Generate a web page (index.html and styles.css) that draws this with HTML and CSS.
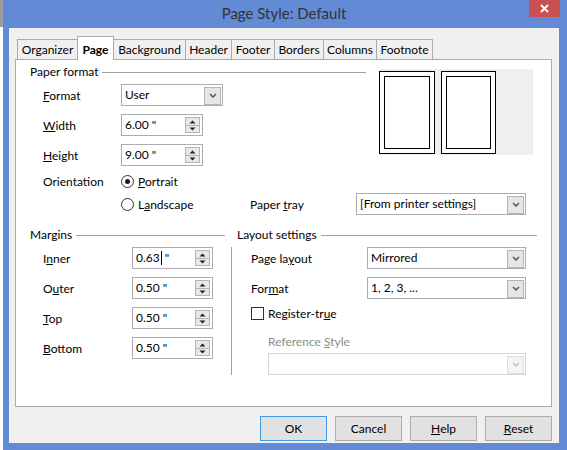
FILE: index.html
```html
<!DOCTYPE html>
<html>
<head>
<meta charset="utf-8">
<title>Page Style: Default</title>
<link rel="stylesheet" href="styles.css">
</head>
<body>
<div class="screen">
  <div class="behind"></div>
  <div class="window">
    <div class="titlebar">
      <div class="title">Page Style: Default</div>
      <div class="close"><svg width="9" height="9" viewBox="0 0 9 9"><path d="M1 1L8 8M8 1L1 8" stroke="#fff" stroke-width="1.8" fill="none"/></svg></div>
    </div>
    <div class="client">
      <div class="tabs">
        <div class="tab t-org">Organizer</div>
        <div class="tab active t-page">Page</div>
        <div class="tab t-bg">Background</div>
        <div class="tab t-hdr">Header</div>
        <div class="tab t-ftr">Footer</div>
        <div class="tab t-brd">Borders</div>
        <div class="tab t-col">Columns</div>
        <div class="tab t-fn">Footnote</div>
      </div>
      <div class="panel">
        <div class="pf">
          <div class="pf-main">
            <div class="legend"><span>Paper format</span><i class="rule"></i></div>
            <div class="frow">
              <span class="lbl"><u>F</u>ormat</span>
              <div class="select s-format"><span class="val">User</span><span class="drop"><svg width="8" height="5" viewBox="0 0 8 5"><path d="M1 1L4 4L7 1" stroke="#555" stroke-width="1.5" fill="none"/></svg></span></div>
            </div>
            <div class="frow">
              <span class="lbl"><u>W</u>idth</span>
              <div class="field f-size"><span class="val">6.00 "</span><span class="spinbtn"><svg width="13" height="14" viewBox="0 0 13 14"><path d="M0 7.5H13" stroke="#b5b5b5"/><path d="M3.5 5.5H9.5L6.5 2.5Z" fill="#222"/><path d="M3.5 9.5H9.5L6.5 12.5Z" fill="#222"/></svg></span></div>
            </div>
            <div class="frow">
              <span class="lbl"><u>H</u>eight</span>
              <div class="field f-size"><span class="val">9.00 "</span><span class="spinbtn"><svg width="13" height="14" viewBox="0 0 13 14"><path d="M0 7.5H13" stroke="#b5b5b5"/><path d="M3.5 5.5H9.5L6.5 2.5Z" fill="#222"/><path d="M3.5 9.5H9.5L6.5 12.5Z" fill="#222"/></svg></span></div>
            </div>
          </div>
          <div class="preview">
            <div class="page p1"><div class="inner"></div></div>
            <div class="page p2"><div class="inner"></div></div>
          </div>
          <div class="orient">
            <div class="orow">
              <span class="lbl">Orientation</span>
              <span class="radio checked"></span><span class="rtext"><u>P</u>ortrait</span>
            </div>
            <div class="orow orow2">
              <span class="lbl"></span>
              <span class="rgroup"><span class="radio"></span><span class="rtext">L<u>a</u>ndscape</span></span>
              <span class="tray-lbl">Paper <u>t</u>ray</span>
              <div class="select s-tray"><span class="val">[From printer settings]</span><span class="drop"><svg width="8" height="5" viewBox="0 0 8 5"><path d="M1 1L4 4L7 1" stroke="#555" stroke-width="1.5" fill="none"/></svg></span></div>
            </div>
          </div>
        </div>

        <div class="bottom">
          <div class="legend lg-margins"><span>Margins</span><i class="rule"></i></div>
          <div class="legend lg-layout"><span>Layout settings</span><i class="rule"></i></div>
          <div class="sep"></div>
          <div class="margins">
            <div class="frow">
              <span class="lbl">I<u>n</u>ner</span>
              <div class="field f-margin"><span class="val">0.63<span class="caret"></span> "</span><span class="spinbtn"><svg width="13" height="14" viewBox="0 0 13 14"><path d="M0 7.5H13" stroke="#b5b5b5"/><path d="M3.5 5.5H9.5L6.5 2.5Z" fill="#222"/><path d="M3.5 9.5H9.5L6.5 12.5Z" fill="#222"/></svg></span></div>
            </div>
            <div class="frow">
              <span class="lbl">O<u>u</u>ter</span>
              <div class="field f-margin"><span class="val">0.50 "</span><span class="spinbtn"><svg width="13" height="14" viewBox="0 0 13 14"><path d="M0 7.5H13" stroke="#b5b5b5"/><path d="M3.5 5.5H9.5L6.5 2.5Z" fill="#222"/><path d="M3.5 9.5H9.5L6.5 12.5Z" fill="#222"/></svg></span></div>
            </div>
            <div class="frow">
              <span class="lbl"><u>T</u>op</span>
              <div class="field f-margin"><span class="val">0.50 "</span><span class="spinbtn"><svg width="13" height="14" viewBox="0 0 13 14"><path d="M0 7.5H13" stroke="#b5b5b5"/><path d="M3.5 5.5H9.5L6.5 2.5Z" fill="#222"/><path d="M3.5 9.5H9.5L6.5 12.5Z" fill="#222"/></svg></span></div>
            </div>
            <div class="frow">
              <span class="lbl"><u>B</u>ottom</span>
              <div class="field f-margin"><span class="val">0.50 "</span><span class="spinbtn"><svg width="13" height="14" viewBox="0 0 13 14"><path d="M0 7.5H13" stroke="#b5b5b5"/><path d="M3.5 5.5H9.5L6.5 2.5Z" fill="#222"/><path d="M3.5 9.5H9.5L6.5 12.5Z" fill="#222"/></svg></span></div>
            </div>
          </div>
          <div class="layout">
            <div class="frow">
              <span class="lbl">Page la<u>y</u>out</span>
              <div class="select s-layout"><span class="val">Mirrored</span><span class="drop"><svg width="8" height="5" viewBox="0 0 8 5"><path d="M1 1L4 4L7 1" stroke="#555" stroke-width="1.5" fill="none"/></svg></span></div>
            </div>
            <div class="frow">
              <span class="lbl">For<u>m</u>at</span>
              <div class="select s-layout"><span class="val">1, 2, 3, ...</span><span class="drop"><svg width="8" height="5" viewBox="0 0 8 5"><path d="M1 1L4 4L7 1" stroke="#555" stroke-width="1.5" fill="none"/></svg></span></div>
            </div>
            <div class="crow"><span class="check"></span><span class="ctext">Register-tr<u>u</u>e</span></div>
            <div class="ref-lbl">Reference <u>S</u>tyle</div>
            <div class="select s-ref disabled"><span class="val"></span><span class="drop"><svg width="8" height="5" viewBox="0 0 8 5"><path d="M1 1L4 4L7 1" stroke="#c4c4c4" stroke-width="1.5" fill="none"/></svg></span></div>
          </div>
        </div>
      </div>
      <div class="buttons">
        <div class="btn default">OK</div>
        <div class="btn">Cancel</div>
        <div class="btn"><u>H</u>elp</div>
        <div class="btn"><u>R</u>eset</div>
      </div>
    </div>
  </div>
</div>
</body>
</html>
```

FILE: styles.css
```css
* { box-sizing: border-box; }
html, body { margin: 0; padding: 0; }
body {
  width: 567px;
  height: 450px;
  overflow: hidden;
  font-family: Lato, "Open Sans", sans-serif;
  font-size: 12px;
  color: #000;
  background: #fff;
}
u { text-decoration: underline; text-underline-offset: 1px; text-decoration-thickness: 1px; }

.screen { display: flex; width: 567px; height: 450px; }
.behind { width: 3px; background: linear-gradient(#9d9d9d 0 27px, #fff 27px); }
.window {
  flex: 1;
  display: flex;
  flex-direction: column;
  background: #628ad5;
  padding: 0 8px 7px 6px;
}

/* title bar */
.titlebar { height: 28px; display: grid; grid-template-columns: 1fr auto 1fr; }
.title {
  grid-column: 2;
  font-size: 15px;
  line-height: 20px;
  padding-top: 3px;
  color: #333;
  white-space: nowrap;
}
.close {
  grid-column: 3;
  justify-self: end;
  width: 31px;
  height: 17px;
  margin-right: -1px;
  background: #c75050;
  display: flex;
  align-items: center;
  justify-content: center;
}
.close svg { display: block; }

/* client */
.client {
  flex: 1;
  display: flex;
  flex-direction: column;
  background: #f0f0f0;
  padding: 8px 7px 2px 6px;
}
.tabs {
  display: flex;
  align-items: flex-end;
  height: 24px;
  margin-bottom: -1px;
  padding-left: 2px;
}
.tab {
  height: 21px;
  border: 1px solid #acacac;
  border-bottom: none;
  margin-right: -1px;
  line-height: 19px;
  background: #f0f0f0;
  white-space: nowrap;
  text-align: center;
  flex: none;
}
.tab.active {
  height: 24px;
  padding-top: 3px;
  background: #fff;
  font-weight: bold;
  position: relative;
  z-index: 1;
}
.t-org { width: 61px; }
.t-page { width: 37px; }
.t-bg { width: 73px; }
.t-hdr { width: 47px; }
.t-ftr { width: 44px; }
.t-brd { width: 50px; }
.t-col { width: 54px; }
.t-fn { width: 57px; }

.panel {
  flex: 1;
  background: #fff;
  border: 1px solid #acacac;
  padding: 4px 0 0 14px;
}

/* legends */
.legend { display: flex; align-items: center; height: 16px; line-height: 16px; white-space: nowrap; }
.legend .rule { flex: 1; height: 1px; background: #a0a0a0; margin-left: 4px; }

/* form rows */
.frow { display: flex; align-items: center; height: 22px; margin-top: 8px; }
.legend + .frow { margin-top: 4px; }
.lbl { white-space: nowrap; }

.field, .select {
  height: 22px;
  border: 1px solid #abadb3;
  background: #fff;
  display: flex;
  align-items: center;
  padding-left: 3px;
}
.val { flex: 1; white-space: nowrap; overflow: hidden; line-height: 16px; }
.spinbtn {
  width: 15px;
  height: 16px;
  border: 1px solid #b5b5b5;
  background: #e8e8e8;
  margin-right: 2px;
  display: flex;
}
.spinbtn svg { display: block; }
.drop {
  width: 17px;
  height: 18px;
  margin-right: 1px;
  margin-top: 1px;
  border: 1px solid #b5b5b5;
  background: #e6e6e6;
  display: flex;
  align-items: center;
  justify-content: center;
}
.drop svg { display: block; }
.caret { display: inline-block; width: 1px; height: 14px; background: #000; vertical-align: -3px; margin-left: 1px; }

/* paper format */
.pf { display: grid; grid-template-columns: 336px 154px; column-gap: 13px; }
.pf-main .frow { padding-left: 13px; }
.pf .lbl { width: 78px; }
.s-format { width: 102px; }
.f-size { width: 82px; }

.preview {
  margin-top: 5px;
  height: 86px;
  background: #efefef;
  display: flex;
  align-items: flex-start;
  gap: 6px;
  padding-top: 2px;
}
.page { height: 83px; border: 1px solid #000; background: #fff; padding: 4px; display: flex; }
.p1 { width: 56px; }
.p2 { width: 55px; }
.inner { flex: 1; border: 1px solid #000; }

.orient { grid-column: 1 / -1; padding-left: 13px; }
.orow { display: flex; align-items: center; height: 16px; margin-top: 7px; }
.orow2 { height: 22px; margin-top: 4px; }
.radio {
  width: 13px;
  height: 13px;
  border: 1px solid #333;
  border-radius: 50%;
  background: #fff;
  display: flex;
  align-items: center;
  justify-content: center;
  flex: none;
}
.radio.checked::after { content: ""; width: 5px; height: 5px; border-radius: 50%; background: #1a1a1a; }
.rtext { margin-left: 4px; white-space: nowrap; }
.rgroup { display: flex; align-items: center; width: 129px; }
.tray-lbl { width: 106px; white-space: nowrap; }
.s-tray { width: 170px; }

/* bottom */
.bottom {
  margin-top: 12px;
  display: grid;
  grid-template-columns: 195px 12px 300px;
  grid-template-rows: 16px auto;
  row-gap: 4px;
}
.lg-margins { grid-column: 1; grid-row: 1; }
.lg-layout { grid-column: 3; grid-row: 1; }
.sep { grid-column: 2; grid-row: 2; justify-self: center; width: 1px; background: #a0a0a0; }
.margins { grid-column: 1; grid-row: 2; padding-left: 13px; }
.margins .frow:first-child, .layout .frow:first-child { margin-top: 0; }
.margins .lbl { width: 89px; }
.f-margin { width: 81px; }

.layout { grid-column: 3; grid-row: 2; padding-left: 14px; }
.layout .lbl { width: 116px; }
.s-layout { width: 159px; }
.crow { display: flex; align-items: center; height: 16px; margin-top: 6px; }
.check { width: 13px; height: 13px; border: 1px solid #333; background: #fff; flex: none; }
.ctext { margin-left: 4px; white-space: nowrap; }
.ref-lbl { margin-top: 13px; height: 16px; line-height: 16px; padding-left: 17px; color: #8b8b8b; white-space: nowrap; }
.s-ref { margin-top: 3px; margin-left: 17px; width: 258px; }
.select.disabled { border-color: #d5d5d5; }
.select.disabled .drop { border-color: #dedede; background: #f4f4f4; }

/* buttons */
.buttons { display: flex; justify-content: flex-end; gap: 8px; margin-top: 9px; }
.btn {
  width: 67px;
  height: 25px;
  border: 1px solid #adadad;
  background: #e1e1e1;
  display: flex;
  align-items: center;
  justify-content: center;
  line-height: 16px;
}
.btn.default { border-color: #3d9bea; }
```
